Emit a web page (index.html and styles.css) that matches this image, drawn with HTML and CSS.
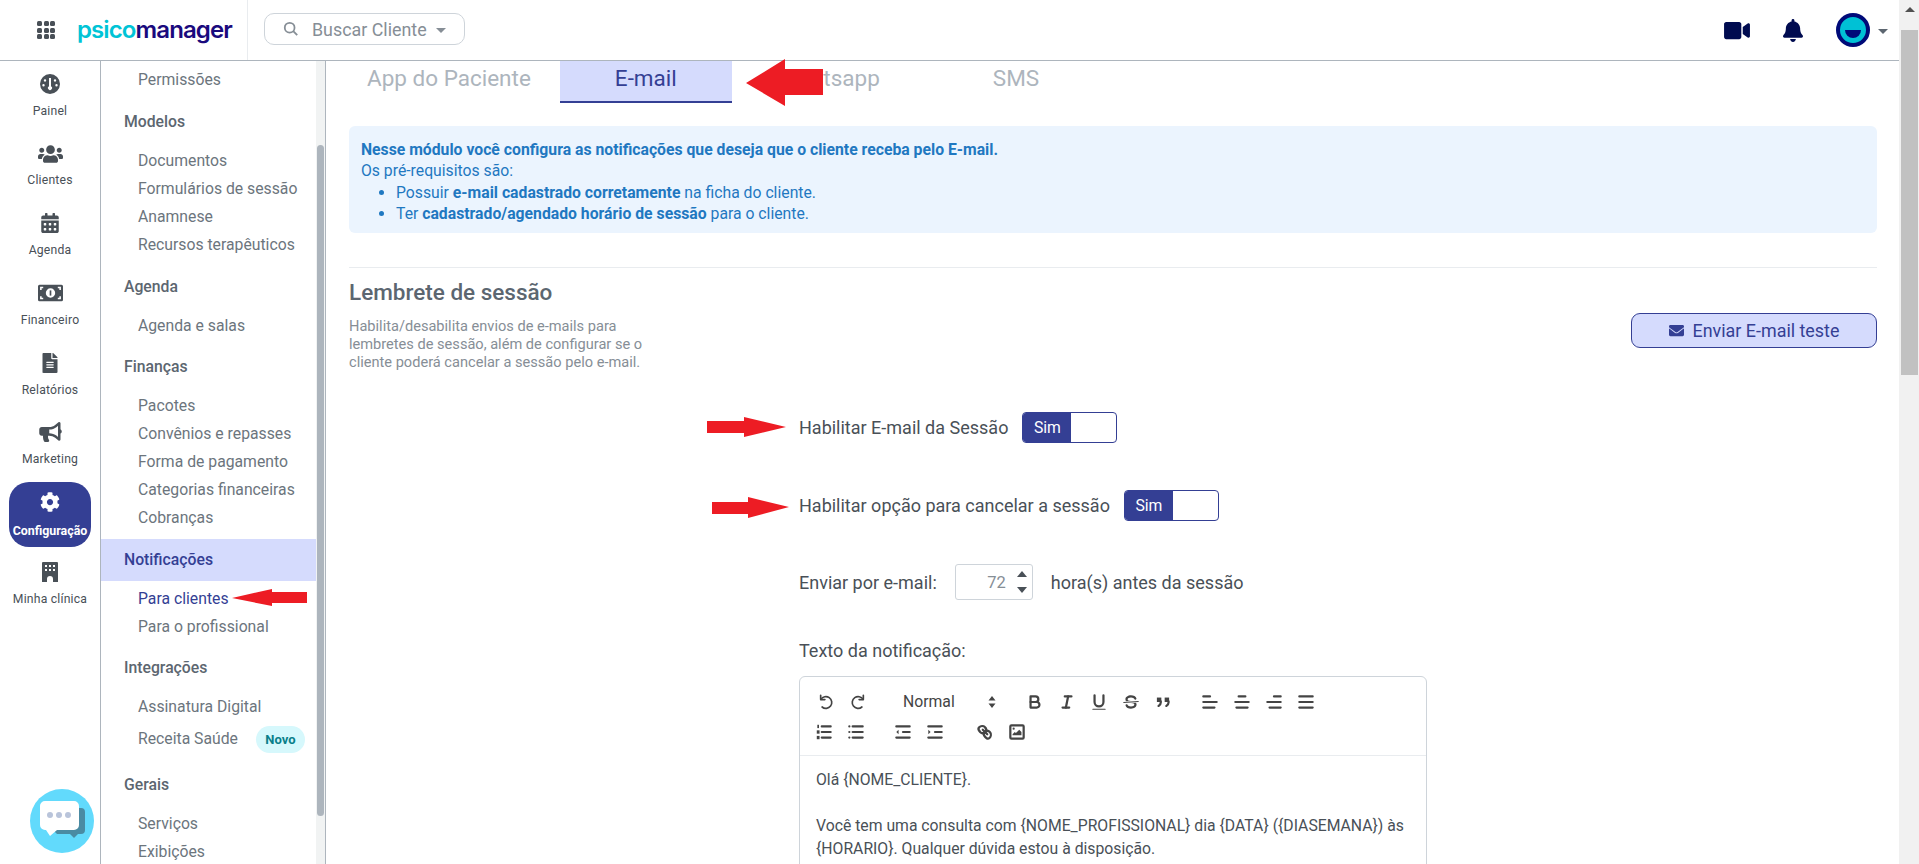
FILE: index.html
```html
<!DOCTYPE html>
<html lang="pt-BR">
<head>
<meta charset="utf-8">
<title>PsicoManager</title>
<link rel="stylesheet" href="styles.css">
</head>
<body>
<div class="page">
  <header class="topbar">
    <div class="brand">
      <div class="waffle"><i></i><i></i><i></i><i></i><i></i><i></i><i></i><i></i><i></i></div>
      <div class="logo"><span class="logo-a">psico</span><span class="logo-b">manager</span></div>
    </div>
    <div class="search">
      <svg class="search-icon" viewBox="0 0 18 18"><circle cx="7.500" cy="7.500" r="5.500"/><line x1="11.500" y1="11.500" x2="16" y2="16"/></svg>
      <span class="search-text">Buscar Cliente</span>
      <span class="caret"></span>
    </div>
    <div class="top-actions">
      <svg class="top-video" viewBox="0 0 576 512"><path d="M336.200 64H47.800C21.400 64 0 85.400 0 111.800v288.400C0 426.600 21.400 448 47.800 448h288.400c26.400 0 47.800-21.400 47.800-47.800V111.800c0-26.400-21.400-47.800-47.800-47.800zm189.400 37.700L416 177.300v157.400l109.600 75.500c21.200 14.600 50.400-.3 50.400-25.800V127.500c0-25.400-29.100-40.400-50.400-25.800z"/></svg>
      <svg class="top-bell" viewBox="0 0 448 512"><path d="M224 512c35.320 0 63.970-28.650 63.970-64H160.030c0 35.350 28.650 64 63.970 64zm215.390-149.710c-19.320-20.760-55.470-51.990-55.470-154.290 0-77.700-54.480-139.900-127.940-155.160V32c0-17.670-14.320-32-31.980-32s-31.980 14.330-31.980 32v20.840C118.560 68.100 64.080 130.300 64.080 208c0 102.300-36.150 133.530-55.470 154.290-6 6.450-8.660 14.160-8.610 21.710.11 16.400 12.980 32 32.100 32h383.800c19.120 0 32-15.600 32.100-32 .05-7.550-2.610-15.270-8.610-21.710z"/></svg>
      <svg class="top-avatar" viewBox="0 0 34 34"><circle cx="17" cy="17" r="15" fill="#00c1d5" stroke="#000a78" stroke-width="4"/><path d="M9 17h16a8 8 0 0 1-16 0z" fill="#000a78"/></svg>
      <span class="caret caret-user"></span>
    </div>
  </header>

  <div class="workspace">
    <nav class="rail">
      <a class="rail-item"><svg class="rail-icon" viewBox="0 0 20 20"><path fill-rule="evenodd" d="M10 0a10 10 0 1 1 0 20 10 10 0 0 1 0-20zM9 4v8.300a2 2 0 1 0 2 0V4H9zM5 5.200a1.200 1.200 0 1 0 0 2.400 1.200 1.200 0 0 0 0-2.400zm10 0a1.200 1.200 0 1 0 0 2.400 1.200 1.200 0 0 0 0-2.400zM3.500 10a1.200 1.200 0 1 0 0 2.400 1.200 1.200 0 0 0 0-2.400zm13 0a1.200 1.200 0 1 0 0 2.400 1.200 1.200 0 0 0 0-2.400z"/></svg><span>Painel</span></a>
      <a class="rail-item"><svg class="rail-icon rail-wide" viewBox="0 0 640 512"><path d="M96 224c35.300 0 64-28.700 64-64s-28.700-64-64-64-64 28.700-64 64 28.700 64 64 64zm448 0c35.300 0 64-28.700 64-64s-28.700-64-64-64-64 28.700-64 64 28.700 64 64 64zm32 32h-64c-17.600 0-33.500 7.100-45.100 18.600 40.300 22.100 68.900 62 75.100 109.400h66c17.700 0 32-14.300 32-32v-32c0-35.300-28.700-64-64-64zm-256 0c61.900 0 112-50.100 112-112S381.900 32 320 32 208 82.100 208 144s50.100 112 112 112zm76.800 32h-8.300c-20.800 10-43.900 16-68.500 16s-47.600-6-68.500-16h-8.300C179.600 288 128 339.600 128 403.200V432c0 26.500 21.500 48 48 48h288c26.500 0 48-21.500 48-48v-28.800c0-63.600-51.600-115.200-115.200-115.200zm-223.700-13.400C161.500 263.100 145.600 256 128 256H64c-35.300 0-64 28.700-64 64v32c0 17.700 14.300 32 32 32h65.900c6.300-47.400 34.900-87.300 75.200-109.400z"/></svg><span>Clientes</span></a>
      <a class="rail-item"><svg class="rail-icon" viewBox="0 0 448 512"><path d="M0 464c0 26.500 21.500 48 48 48h352c26.500 0 48-21.500 48-48V192H0v272zm320-196c0-6.600 5.400-12 12-12h40c6.600 0 12 5.400 12 12v40c0 6.600-5.400 12-12 12h-40c-6.600 0-12-5.400-12-12v-40zm0 128c0-6.600 5.400-12 12-12h40c6.600 0 12 5.400 12 12v40c0 6.600-5.400 12-12 12h-40c-6.600 0-12-5.400-12-12v-40zM192 268c0-6.600 5.400-12 12-12h40c6.600 0 12 5.400 12 12v40c0 6.600-5.400 12-12 12h-40c-6.600 0-12-5.400-12-12v-40zm0 128c0-6.600 5.400-12 12-12h40c6.600 0 12 5.400 12 12v40c0 6.600-5.400 12-12 12h-40c-6.600 0-12-5.400-12-12v-40zM64 268c0-6.600 5.400-12 12-12h40c6.600 0 12 5.400 12 12v40c0 6.600-5.400 12-12 12H76c-6.600 0-12-5.400-12-12v-40zm0 128c0-6.600 5.400-12 12-12h40c6.600 0 12 5.400 12 12v40c0 6.600-5.400 12-12 12H76c-6.600 0-12-5.400-12-12v-40zM400 64h-48V16c0-8.800-7.200-16-16-16h-32c-8.800 0-16 7.200-16 16v48H160V16c0-8.800-7.200-16-16-16h-32c-8.800 0-16 7.200-16 16v48H48C21.500 64 0 85.500 0 112v48h448v-48c0-26.500-21.500-48-48-48z"/></svg><span>Agenda</span></a>
      <a class="rail-item"><svg class="rail-icon rail-wide" viewBox="0 0 24 16"><path fill-rule="evenodd" d="M1.500 0h21A1.500 1.500 0 0 1 24 1.500v13a1.500 1.500 0 0 1-1.500 1.500h-21A1.500 1.500 0 0 1 0 14.500v-13A1.500 1.500 0 0 1 1.500 0zM12 3.500a4.500 4.500 0 1 0 0 9 4.500 4.500 0 0 0 0-9zM2 2v3h1.500V3.500H5V2H2zm17 0v1.500h1.500V5H22V2h-3zM2 11v3h3v-1.500H3.500V11H2zm18.500 0v1.500H19V14h3v-3h-1.500z"/><rect x="11.200" y="5.500" width="1.600" height="5"/></svg><span>Financeiro</span></a>
      <a class="rail-item"><svg class="rail-icon" viewBox="0 0 384 512"><path d="M224 136V0H24C10.700 0 0 10.700 0 24v464c0 13.300 10.700 24 24 24h336c13.300 0 24-10.700 24-24V160H248c-13.200 0-24-10.800-24-24zm64 236c0 6.600-5.400 12-12 12H108c-6.600 0-12-5.400-12-12v-8c0-6.600 5.400-12 12-12h168c6.600 0 12 5.400 12 12v8zm0-64c0 6.600-5.400 12-12 12H108c-6.600 0-12-5.400-12-12v-8c0-6.600 5.400-12 12-12h168c6.600 0 12 5.400 12 12v8zm0-72v8c0 6.600-5.400 12-12 12H108c-6.600 0-12-5.400-12-12v-8c0-6.600 5.400-12 12-12h168c6.600 0 12 5.400 12 12zm96-114.100v6.100H256V0h6.100c6.400 0 12.500 2.500 17 7l97.900 98c4.500 4.500 7 10.600 7 16.900z"/></svg><span>Relatórios</span></a>
      <a class="rail-item"><svg class="rail-icon rail-wide" viewBox="0 0 576 512"><path d="M576 240c0-23.630-12.950-44.040-32-55.120V32.010C544 23.260 537.020 0 512 0c-7.120 0-14.190 2.380-19.980 7.020l-85.030 68.030C364.280 109.090 310.220 128 256 128H64c-35.350 0-64 28.650-64 64v96c0 35.350 28.650 64 64 64h33.700c-1.390 10.480-2.180 21.140-2.180 32 0 39.770 9.260 77.350 25.560 110.940 5.190 10.690 16.520 17.060 28.400 17.060h74.280c26.050 0 41.690-29.840 25.900-50.560-16.400-21.520-26.150-48.360-26.150-77.440 0-11.110 1.620-21.790 4.410-32H256c54.220 0 108.280 18.910 150.980 52.950l85.030 68.030a32.023 32.023 0 0 0 19.980 7.020c24.920 0 32-22.780 32-32V295.130C563.050 284.040 576 263.630 576 240zm-96 141.420l-33.050-26.440C392.950 311.780 325.120 288 256 288v-96c69.120 0 136.950-23.780 190.950-66.980L480 98.580v282.840z"/></svg><span>Marketing</span></a>
      <a class="rail-item rail-active"><svg class="rail-icon" viewBox="0 0 512 512"><path d="M487.400 315.700l-42.600-24.600c4.300-23.200 4.300-47 0-70.200l42.600-24.600c4.900-2.800 7.100-8.600 5.500-14-11.100-35.600-30-67.800-54.700-94.600-3.800-4.100-10-5.100-14.800-2.300L380.800 110c-17.900-15.400-38.500-27.300-60.800-35.100V25.800c0-5.600-3.900-10.500-9.400-11.700-36.700-8.200-74.300-7.800-109.200 0-5.500 1.200-9.400 6.100-9.400 11.700V75c-22.200 7.900-42.800 19.800-60.800 35.100L88.700 85.500c-4.900-2.800-11-1.900-14.800 2.300-24.700 26.700-43.600 58.900-54.700 94.600-1.700 5.400.6 11.200 5.500 14L67.300 221c-4.300 23.200-4.300 47 0 70.200l-42.600 24.600c-4.900 2.800-7.100 8.600-5.500 14 11.100 35.600 30 67.800 54.700 94.600 3.800 4.100 10 5.100 14.800 2.300l42.600-24.600c17.900 15.400 38.500 27.300 60.800 35.100v49.200c0 5.600 3.900 10.500 9.400 11.700 36.700 8.200 74.300 7.800 109.200 0 5.500-1.200 9.400-6.100 9.400-11.700v-49.200c22.200-7.900 42.800-19.800 60.800-35.100l42.600 24.600c4.900 2.800 11 1.900 14.800-2.300 24.700-26.700 43.600-58.900 54.700-94.600 1.500-5.500-.7-11.300-5.600-14.100zM256 336c-44.100 0-80-35.900-80-80s35.900-80 80-80 80 35.900 80 80-35.900 80-80 80z"/></svg><span>Configuração</span></a>
      <a class="rail-item"><svg class="rail-icon" viewBox="0 0 16 20"><path fill-rule="evenodd" d="M1 0h14a1 1 0 0 1 1 1v19h-5v-3a3 3 0 0 0-6 0v3H0V1a1 1 0 0 1 1-1zm2 3v2h2V3H3zm4 0v2h2V3H7zm4 0v2h2V3h-2zM3 7v2h2V7H3zm4 0v2h2V7H7zm4 0v2h2V7h-2z"/></svg><span>Minha clínica</span></a>
    </nav>

    <aside class="subnav">
      <div class="subnav-list">
        <ul class="links links-first"><li>Permissões</li></ul>
        <h4 class="group">Modelos</h4>
        <ul class="links"><li>Documentos</li><li>Formulários de sessão</li><li>Anamnese</li><li>Recursos terapêuticos</li></ul>
        <h4 class="group">Agenda</h4>
        <ul class="links"><li>Agenda e salas</li></ul>
        <h4 class="group">Finanças</h4>
        <ul class="links"><li>Pacotes</li><li>Convênios e repasses</li><li>Forma de pagamento</li><li>Categorias financeiras</li><li>Cobranças</li></ul>
        <h4 class="group group-active">Notificações</h4>
        <ul class="links"><li class="link-active">Para clientes</li><li>Para o profissional</li></ul>
        <h4 class="group">Integrações</h4>
        <ul class="links"><li>Assinatura Digital</li><li class="link-badge">Receita Saúde<span class="badge">Novo</span></li></ul>
        <h4 class="group">Gerais</h4>
        <ul class="links"><li>Serviços</li><li>Exibições</li></ul>
      </div>
      <div class="subnav-scroll"><div class="subnav-thumb"></div></div>
    </aside>

    <main class="main">
      <div class="tabs">
        <div class="tab tab-first">App do Paciente</div>
        <div class="tab tab-active">E-mail</div>
        <div class="tab tab-wa">Whatsapp</div>
        <div class="tab">SMS</div>
      </div>

      <div class="alert">
        <strong>Nesse módulo você configura as notificações que deseja que o cliente receba pelo E-mail.</strong>
        <p>Os pré-requisitos são:</p>
        <ul>
          <li>Possuir <strong>e-mail cadastrado corretamente</strong> na ficha do cliente.</li>
          <li>Ter <strong>cadastrado/agendado horário de sessão</strong> para o cliente.</li>
        </ul>
      </div>

      <hr class="rule">

      <section class="section-head">
        <div class="section-copy">
          <h3>Lembrete de sessão</h3>
          <p>Habilita/desabilita envios de e-mails para lembretes de sessão, além de configurar se o cliente poderá cancelar a sessão pelo e-mail.</p>
        </div>
        <button class="test-btn"><svg viewBox="0 0 512 512"><path d="M502.300 190.800c3.900-3.100 9.700-.2 9.700 4.700V400c0 26.500-21.500 48-48 48H48c-26.500 0-48-21.500-48-48V195.600c0-5 5.700-7.800 9.700-4.700 22.400 17.400 52.100 39.500 154.100 113.600 21.100 15.400 56.700 47.800 92.200 47.600 35.700.3 72-32.800 92.300-47.600 102-74.100 131.600-96.300 154-113.700zM256 320c23.200.4 56.600-29.200 73.400-41.400 132.700-96.300 142.800-104.700 173.400-128.700 5.800-4.500 9.200-11.500 9.200-18.900v-19c0-26.500-21.500-48-48-48H48C21.500 64 0 85.500 0 112v19c0 7.400 3.400 14.300 9.200 18.900 30.600 23.900 40.700 32.400 173.400 128.700 16.800 12.200 50.200 41.800 73.400 41.400z"/></svg>Enviar E-mail teste</button>
      </section>

      <form class="form">
        <div class="form-row row-first"><label>Habilitar E-mail da Sessão</label><div class="toggle"><span>Sim</span></div></div>
        <div class="form-row row-second"><label>Habilitar opção para cancelar a sessão</label><div class="toggle"><span>Sim</span></div></div>
        <div class="form-row row-third"><label>Enviar por e-mail:</label>
          <div class="number"><span>72</span><div class="spin"><i class="up"></i><i class="down"></i></div></div>
          <label class="after">hora(s) antes da sessão</label></div>
        <div class="editor-label">Texto da notificação:</div>
        <div class="editor">
          <div class="toolbar">
            <div class="tool-row">
              <div class="tool-group">
                <span class="tool tool-thin"><svg viewBox="0 0 18 18"><path d="M4.200 3v3.800H8"/><path d="M4.400 6.600A5.300 5.300 0 1 1 5.500 13.500"/></svg></span>
                <span class="tool tool-thin"><svg viewBox="0 0 18 18"><path d="M13.800 3v3.800H10"/><path d="M13.600 6.600A5.300 5.300 0 1 0 12.500 13.500"/></svg></span>
              </div>
              <div class="picker"><span>Normal</span><svg viewBox="0 0 10 14"><path d="M5 1l3.500 4.500h-7zM5 13L1.500 8.500h7z"/></svg></div>
              <div class="tool-group">
                <span class="tool"><svg viewBox="0 0 18 18"><path d="M5,4H9.500A2.500,2.500,0,0,1,12,6.500v0A2.500,2.500,0,0,1,9.500,9H5V4Z"/><path d="M5,9h5.500A2.500,2.500,0,0,1,13,11.500v0A2.500,2.500,0,0,1,10.500,14H5V9Z"/></svg></span>
                <span class="tool"><svg viewBox="0 0 18 18"><line x1="7" x2="13" y1="4" y2="4"/><line x1="5" x2="11" y1="14" y2="14"/><line x1="8" x2="10" y1="14" y2="4"/></svg></span>
                <span class="tool"><svg viewBox="0 0 18 18"><path d="M5,3V9a4,4,0,0,0,4,4h0a4,4,0,0,0,4-4V3"/><rect class="fill" x="3" y="15" width="12" height="1" rx=".5"/></svg></span>
                <span class="tool"><svg viewBox="0 0 18 18"><line class="thin" x1="15.500" x2="2.500" y1="8.500" y2="9.500"/><path class="fill" d="M9.007,8C6.542,7.791,6,7.519,6,6.500,6,5.792,7.283,5,9,5c1.571,0,2.765.679,2.969,1.309a1,1,0,0,0,1.900-.617C13.356,4.106,11.354,3,9,3,6.215,3,4,4.540,4,6.500a3.200,3.200,0,0,0,.500,1.843Z"/><path class="fill" d="M8.984,10C11.457,10.208,12,10.479,12,11.500c0,.708-1.283,1.500-3,1.500-1.571,0-2.765-.679-2.969-1.309a1,1,0,1,0-1.900.617C4.644,13.894,6.646,15,9,15c2.785,0,5-1.540,5-3.500a3.200,3.200,0,0,0-.500-1.843Z"/></svg></span>
                <span class="tool"><svg viewBox="0 0 18 18"><rect class="fill" x="3.500" y="5" width="4" height="4"/><rect class="fill" x="10.500" y="5" width="4" height="4"/><path d="M7,8.500V9.500c0,2-2,3-2,3"/><path d="M14,8.500V9.500c0,2-2,3-2,3"/></svg></span>
              </div>
              <div class="tool-group">
                <span class="tool"><svg viewBox="0 0 18 18"><line x1="3" x2="15" y1="9" y2="9"/><line x1="3" x2="13" y1="14" y2="14"/><line x1="3" x2="9" y1="4" y2="4"/></svg></span>
                <span class="tool"><svg viewBox="0 0 18 18"><line x1="15" x2="3" y1="9" y2="9"/><line x1="14" x2="4" y1="14" y2="14"/><line x1="12" x2="6" y1="4" y2="4"/></svg></span>
                <span class="tool"><svg viewBox="0 0 18 18"><line x1="15" x2="3" y1="9" y2="9"/><line x1="15" x2="5" y1="14" y2="14"/><line x1="15" x2="9" y1="4" y2="4"/></svg></span>
                <span class="tool"><svg viewBox="0 0 18 18"><line x1="15" x2="3" y1="9" y2="9"/><line x1="15" x2="3" y1="14" y2="14"/><line x1="15" x2="3" y1="4" y2="4"/></svg></span>
              </div>
            </div>
            <div class="tool-row tool-row-2">
              <div class="tool-group">
                <span class="tool"><svg viewBox="0 0 18 18"><line x1="7" x2="15" y1="4" y2="4"/><line x1="7" x2="15" y1="9" y2="9"/><line x1="7" x2="15" y1="14" y2="14"/><rect class="fill" x="3" y="2.500" width="1.500" height="3"/><rect class="fill" x="2.500" y="7.500" width="2.500" height="3"/><rect class="fill" x="2.500" y="12.500" width="2.500" height="3"/></svg></span>
                <span class="tool"><svg viewBox="0 0 18 18"><line x1="6" x2="15" y1="4" y2="4"/><line x1="6" x2="15" y1="9" y2="9"/><line x1="6" x2="15" y1="14" y2="14"/><line x1="3" x2="3" y1="4" y2="4"/><line x1="3" x2="3" y1="9" y2="9"/><line x1="3" x2="3" y1="14" y2="14"/></svg></span>
              </div>
              <div class="tool-group">
                <span class="tool"><svg viewBox="0 0 18 18"><line x1="3" x2="15" y1="14" y2="14"/><line x1="3" x2="15" y1="4" y2="4"/><line x1="9" x2="15" y1="9" y2="9"/><polygon class="fill" points="5 7 5 11 3 9"/></svg></span>
                <span class="tool"><svg viewBox="0 0 18 18"><line x1="3" x2="15" y1="14" y2="14"/><line x1="3" x2="15" y1="4" y2="4"/><line x1="9" x2="15" y1="9" y2="9"/><polygon class="fill" points="3 7 3 11 5 9"/></svg></span>
              </div>
              <div class="tool-group">
                <span class="tool"><svg viewBox="0 0 18 18"><line x1="7" x2="11" y1="7" y2="11"/><path d="M8.900,4.577a3.476,3.476,0,0,1,.360,4.679A3.476,3.476,0,0,1,4.577,8.900C3.185,7.500,2.350,6.151,3.750,4.750S7.500,3.185,8.900,4.577Z"/><path d="M13.423,9.100a3.476,3.476,0,0,0-4.679-.360,3.476,3.476,0,0,0,.360,4.679c1.392,1.392,2.500,2.350,3.900.950S14.815,10.500,13.423,9.100Z"/></svg></span>
                <span class="tool"><svg viewBox="0 0 18 18"><rect x="3" y="3" width="12" height="12" rx="1"/><circle class="fill" cx="6" cy="6" r="1"/><polygon class="fill" points="5 12 5 11 7 9 8 10 11 7 13 9 13 12 5 12"/></svg></span>
              </div>
            </div>
          </div>
          <div class="editor-body">
            <p>Olá {NOME_CLIENTE}.</p>
            <p><br></p>
            <p>Você tem uma consulta com {NOME_PROFISSIONAL} dia {DATA} ({DIASEMANA}) às {HORARIO}. Qualquer dúvida estou à disposição.</p>
          </div>
        </div>
      </form>
    </main>
  </div>
</div>
<div class="page-scroll"><span class="page-scroll-up"></span><div class="page-scroll-thumb"></div></div>

<svg class="arrow arrow-tab" viewBox="0 0 77 47"><polygon points="0,24 39,0 39,10 77,10 77,36 39,36 39,47"/></svg>
<svg class="arrow arrow-link" viewBox="0 0 75 17"><polygon points="0,9 40,0 40,3 75,3 75,14 40,14 40,17"/></svg>
<svg class="arrow arrow-one" viewBox="0 0 79 20"><polygon points="0,4 37,4 37,0 79,10 37,20 37,16 0,16"/></svg>
<svg class="arrow arrow-two" viewBox="0 0 77 21"><polygon points="0,5 36,5 36,0 77,10 36,21 36,17 0,17"/></svg>

<div class="chat">
  <svg viewBox="0 0 64 64"><path d="M31 19h20a4 4 0 0 1 4 4v18a4 4 0 0 1-4 4h-3l-4 4-4-4H27l-4-4z" fill="#4a8ba3"/><path d="M15 12h29a5 5 0 0 1 5 5v19a5 5 0 0 1-5 5H27l-7 6-4-6h-1a5 5 0 0 1-5-5V17a5 5 0 0 1 5-5z" fill="#fff"/><circle cx="20" cy="26" r="3" fill="#b9c4da"/><circle cx="29" cy="26" r="3" fill="#b9c4da"/><circle cx="38" cy="26" r="3" fill="#b9c4da"/></svg>
</div>
</body>
</html>
```

FILE: styles.css
```css
* { box-sizing: border-box; }
html, body { height: 100%; }
body {
  margin: 0;
  display: flex;
  height: 864px;
  overflow: hidden;
  background: #fff;
  font-family: Roboto, "Liberation Sans", sans-serif;
  color: #495057;
}
ul, p, h3, h4 { margin: 0; padding: 0; }
ul { list-style: none; }

.page { flex: 1; min-width: 0; display: flex; flex-direction: column; height: 864px; }

/* top bar */
.topbar { height: 61px; flex: none; display: flex; align-items: center; border-bottom: 1px solid #adb5bd; background: #fff; }
.brand { width: 248px; height: 60px; flex: none; display: flex; align-items: center; padding-left: 37px; border-right: 1px solid #e9ecef; }
.waffle { width: 18px; height: 18px; display: grid; grid-template-columns: repeat(3, 5px); grid-auto-rows: 5px; gap: 1.500px; }
.waffle i { background: #495057; border-radius: 1.500px; }
.logo { margin-left: 22px; font-family: Inter, sans-serif; font-weight: 600; font-size: 24px; letter-spacing: -.9px; line-height: 30px; }
.logo-a { color: #00c4d6; }
.logo-b { color: #1a0a7d; }
.search { margin: 0 0 2px 16px; width: 201px; height: 32px; border: 1px solid #ced4da; border-radius: 10px; display: flex; align-items: center; padding-left: 18px; }
.search-icon { width: 16px; height: 16px; fill: none; stroke: #868e96; stroke-width: 2; }
.search-text { margin-left: 13px; font-size: 17.850px; color: #868e96; }
.caret { width: 0; height: 0; border-left: 5px solid transparent; border-right: 5px solid transparent; border-top: 5px solid #868e96; margin-left: 9px; margin-top: 2px; }
.top-actions { margin-left: auto; display: flex; align-items: center; padding-right: 11px; }
.top-video { width: 26px; height: 23px; fill: #000b50; }
.top-bell { width: 20px; height: 23px; fill: #000b50; margin-left: 33px; }
.top-avatar { width: 34px; height: 34px; margin-left: 33px; }
.caret-user { border-top-color: #5c6670; margin-left: 8px; }

/* workspace */
.workspace { flex: 1; min-height: 0; display: flex; }

.rail { width: 101px; flex: none; border-right: 1px solid #adb5bd; padding: 3px 9px 0; position: relative; }
.rail-item { height: 65px; margin-bottom: 4.700px; display: flex; flex-direction: column; align-items: center; padding-top: 10px; color: #495057; font-size: 12.200px; letter-spacing: .2px; border-radius: 20px; }
.rail-item span { margin-top: 9.800px; line-height: 14px; white-space: nowrap; }
.rail-icon { width: 20px; height: 20px; fill: #495057; flex: none; }
.rail-wide { width: 25px; }
.rail-active { background: #343f94; color: #fff; font-weight: 700; font-size: 12.400px; letter-spacing: 0; padding-top: 10px; }
.rail-active span { margin-top: 11.500px; }
.rail-active .rail-icon { fill: #fff; }

.subnav { width: 225px; flex: none; display: flex; border-right: 1px solid #adb5bd; }
.subnav-list { width: 215px; flex: none; overflow: hidden; height: 803px; padding-top: 1.400px; }
.links { padding: 4px 0 6.600px; }
.links li { height: 28px; line-height: 28px; padding-left: 37px; font-size: 15.750px; color: #6c757d; white-space: nowrap; }
.group { height: 42px; line-height: 42px; padding-left: 23px; font-size: 15.750px; font-weight: 500; color: #5c6670; }
.group-active { background: #d5dbfd; color: #343f94; }
.links .link-active { color: #343f94; }
.links .link-badge { height: 36px; line-height: 36px; display: flex; align-items: center; }
.badge { margin-left: 18px; width: 49px; height: 27px; line-height: 27px; border-radius: 14px; background: #d6f8fc; color: #0a7f8a; font-size: 13px; font-weight: 700; text-align: center; }
.subnav-scroll { flex: 1; background: #f1f3f3; padding: 84px 1px 0; }
.subnav-thumb { height: 671px; background: #adb5bd; border-radius: 4px; }

/* main */
.main { flex: 1; min-width: 0; height: 803px; overflow: hidden; padding: 0 22px 0 23px; }
.tabs { display: flex; height: 42px; margin-left: -11px; }
.tab { padding: 0 55px; height: 42px; line-height: 35px; font-size: 22.500px; color: #adb5bd; white-space: nowrap; }
.tab-first { padding: 0 29px; }
.tab-active { background: #d5dbfd; color: #343f94; border-bottom: 2px solid #343f94; }
.tab-wa { padding: 0 58px 0 47px; }
.alert { margin-top: 23px; height: 107px; background: #ebf4fe; border-radius: 6px; padding: 12.500px 12px; color: #1f78c1; font-size: 15.750px; line-height: 21.500px; }
.alert strong { font-weight: 700; }
.alert ul { list-style: disc; padding-left: 35px; }
.rule { margin: 34px 0 0; border: 0; border-top: 1px solid #e9ecef; }

.section-head { display: flex; justify-content: space-between; align-items: flex-start; }
.section-copy { width: 310px; padding-top: 11px; }
.section-copy h3 { font-size: 22.500px; line-height: 26px; font-weight: 500; color: #5c6670; }
.section-copy p { margin-top: 12px; font-size: 14.600px; line-height: 18px; color: #868e96; }
.test-btn { margin-top: 45px; width: 246px; height: 35px; display: flex; align-items: center; justify-content: center; background: #d5dbfd; border: 1px solid #343f94; border-radius: 9px; color: #343f94; font: 400 17.900px Roboto, sans-serif; }
.test-btn svg { width: 15px; height: 15px; fill: #343f94; margin-right: 9px; }

.form { margin-left: 450px; width: 628px; }
.form-row { display: flex; align-items: center; font-size: 18px; color: #495057; }
.form-row label { white-space: nowrap; }
.row-first { margin-top: 41px; height: 31px; }
.row-second { margin-top: 47px; height: 31px; }
.row-third { margin-top: 43px; height: 36px; }
.toggle { margin-left: 14px; width: 95px; height: 31px; border: 1px solid #343f94; border-radius: 4px; overflow: hidden; display: flex; }
.toggle span { width: 48px; background: #343f94; color: #fff; font-size: 15.750px; line-height: 29px; text-align: center; }
.number { margin-left: 18px; width: 78px; height: 36px; border: 1px solid #ced4da; border-radius: 3px; display: flex; align-items: center; justify-content: flex-end; color: #868e96; font-size: 16.500px; padding-right: 5px; }
.spin { margin-left: 11px; display: flex; flex-direction: column; gap: 10px; }
.spin i { width: 0; height: 0; border-left: 5px solid transparent; border-right: 5px solid transparent; }
.spin .up { border-bottom: 6px solid #495057; }
.spin .down { border-top: 6px solid #495057; }
.after { margin-left: 18px; }
.editor-label { margin-top: 39.500px; height: 22px; line-height: 22px; font-size: 18px; color: #495057; }
.editor { margin-top: 14px; border: 1px solid #ced4da; border-radius: 6px; height: 300px; }
.toolbar { height: 79px; border-bottom: 1px solid #e9ecef; padding: 10px 0 0 10px; }
.tool-row { display: flex; height: 30px; }
.tool-row-2 { margin-left: -2px; }
.tool-row-2 .tool-group:nth-child(2) { margin-right: 18px; }
.tool-group { display: flex; margin-right: 15px; }
.tool { width: 32px; height: 30px; display: flex; align-items: center; justify-content: center; }
.tool svg { width: 20px; height: 20px; fill: none; stroke: #444; stroke-width: 2; stroke-linecap: round; stroke-linejoin: round; }
.tool .fill { fill: #444; stroke: none; }
.tool .thin { stroke-width: 1; }
.tool-thin svg { stroke-width: 1.500; }
.picker { width: 115px; margin-right: 15px; height: 30px; display: flex; align-items: center; padding-left: 14px; font-size: 15.750px; color: #444; }
.picker svg { width: 10px; height: 14px; fill: #444; margin-left: 32px; }
.editor-body { padding: 12px 16px; font-size: 15.750px; line-height: 23.200px; color: #495057; }

/* page scrollbar */
.page-scroll { width: 20px; flex: none; background: #f1f1f1; height: 864px; padding: 7px 1px 0 2px; position: relative; }
.page-scroll-up { display: block; width: 0; height: 0; margin: 0 auto; border-left: 5px solid transparent; border-right: 5px solid transparent; border-bottom: 5px solid #505050; }
.page-scroll-thumb { margin-top: 18px; height: 345px; background: #c1c1c1; }

/* annotations painted on top of the screenshot */
.arrow { position: absolute; fill: #ed1c24; }
.arrow-tab { left: 746px; top: 59px; width: 77px; height: 47px; }
.arrow-link { left: 232px; top: 589px; width: 75px; height: 17px; }
.arrow-one { left: 707px; top: 417px; width: 79px; height: 20px; }
.arrow-two { left: 712px; top: 497px; width: 77px; height: 21px; }

.chat { position: absolute; left: 30px; top: 789px; width: 64px; height: 64px; border-radius: 50%; background: #62dafc; }
.chat svg { display: block; width: 64px; height: 64px; }
```
